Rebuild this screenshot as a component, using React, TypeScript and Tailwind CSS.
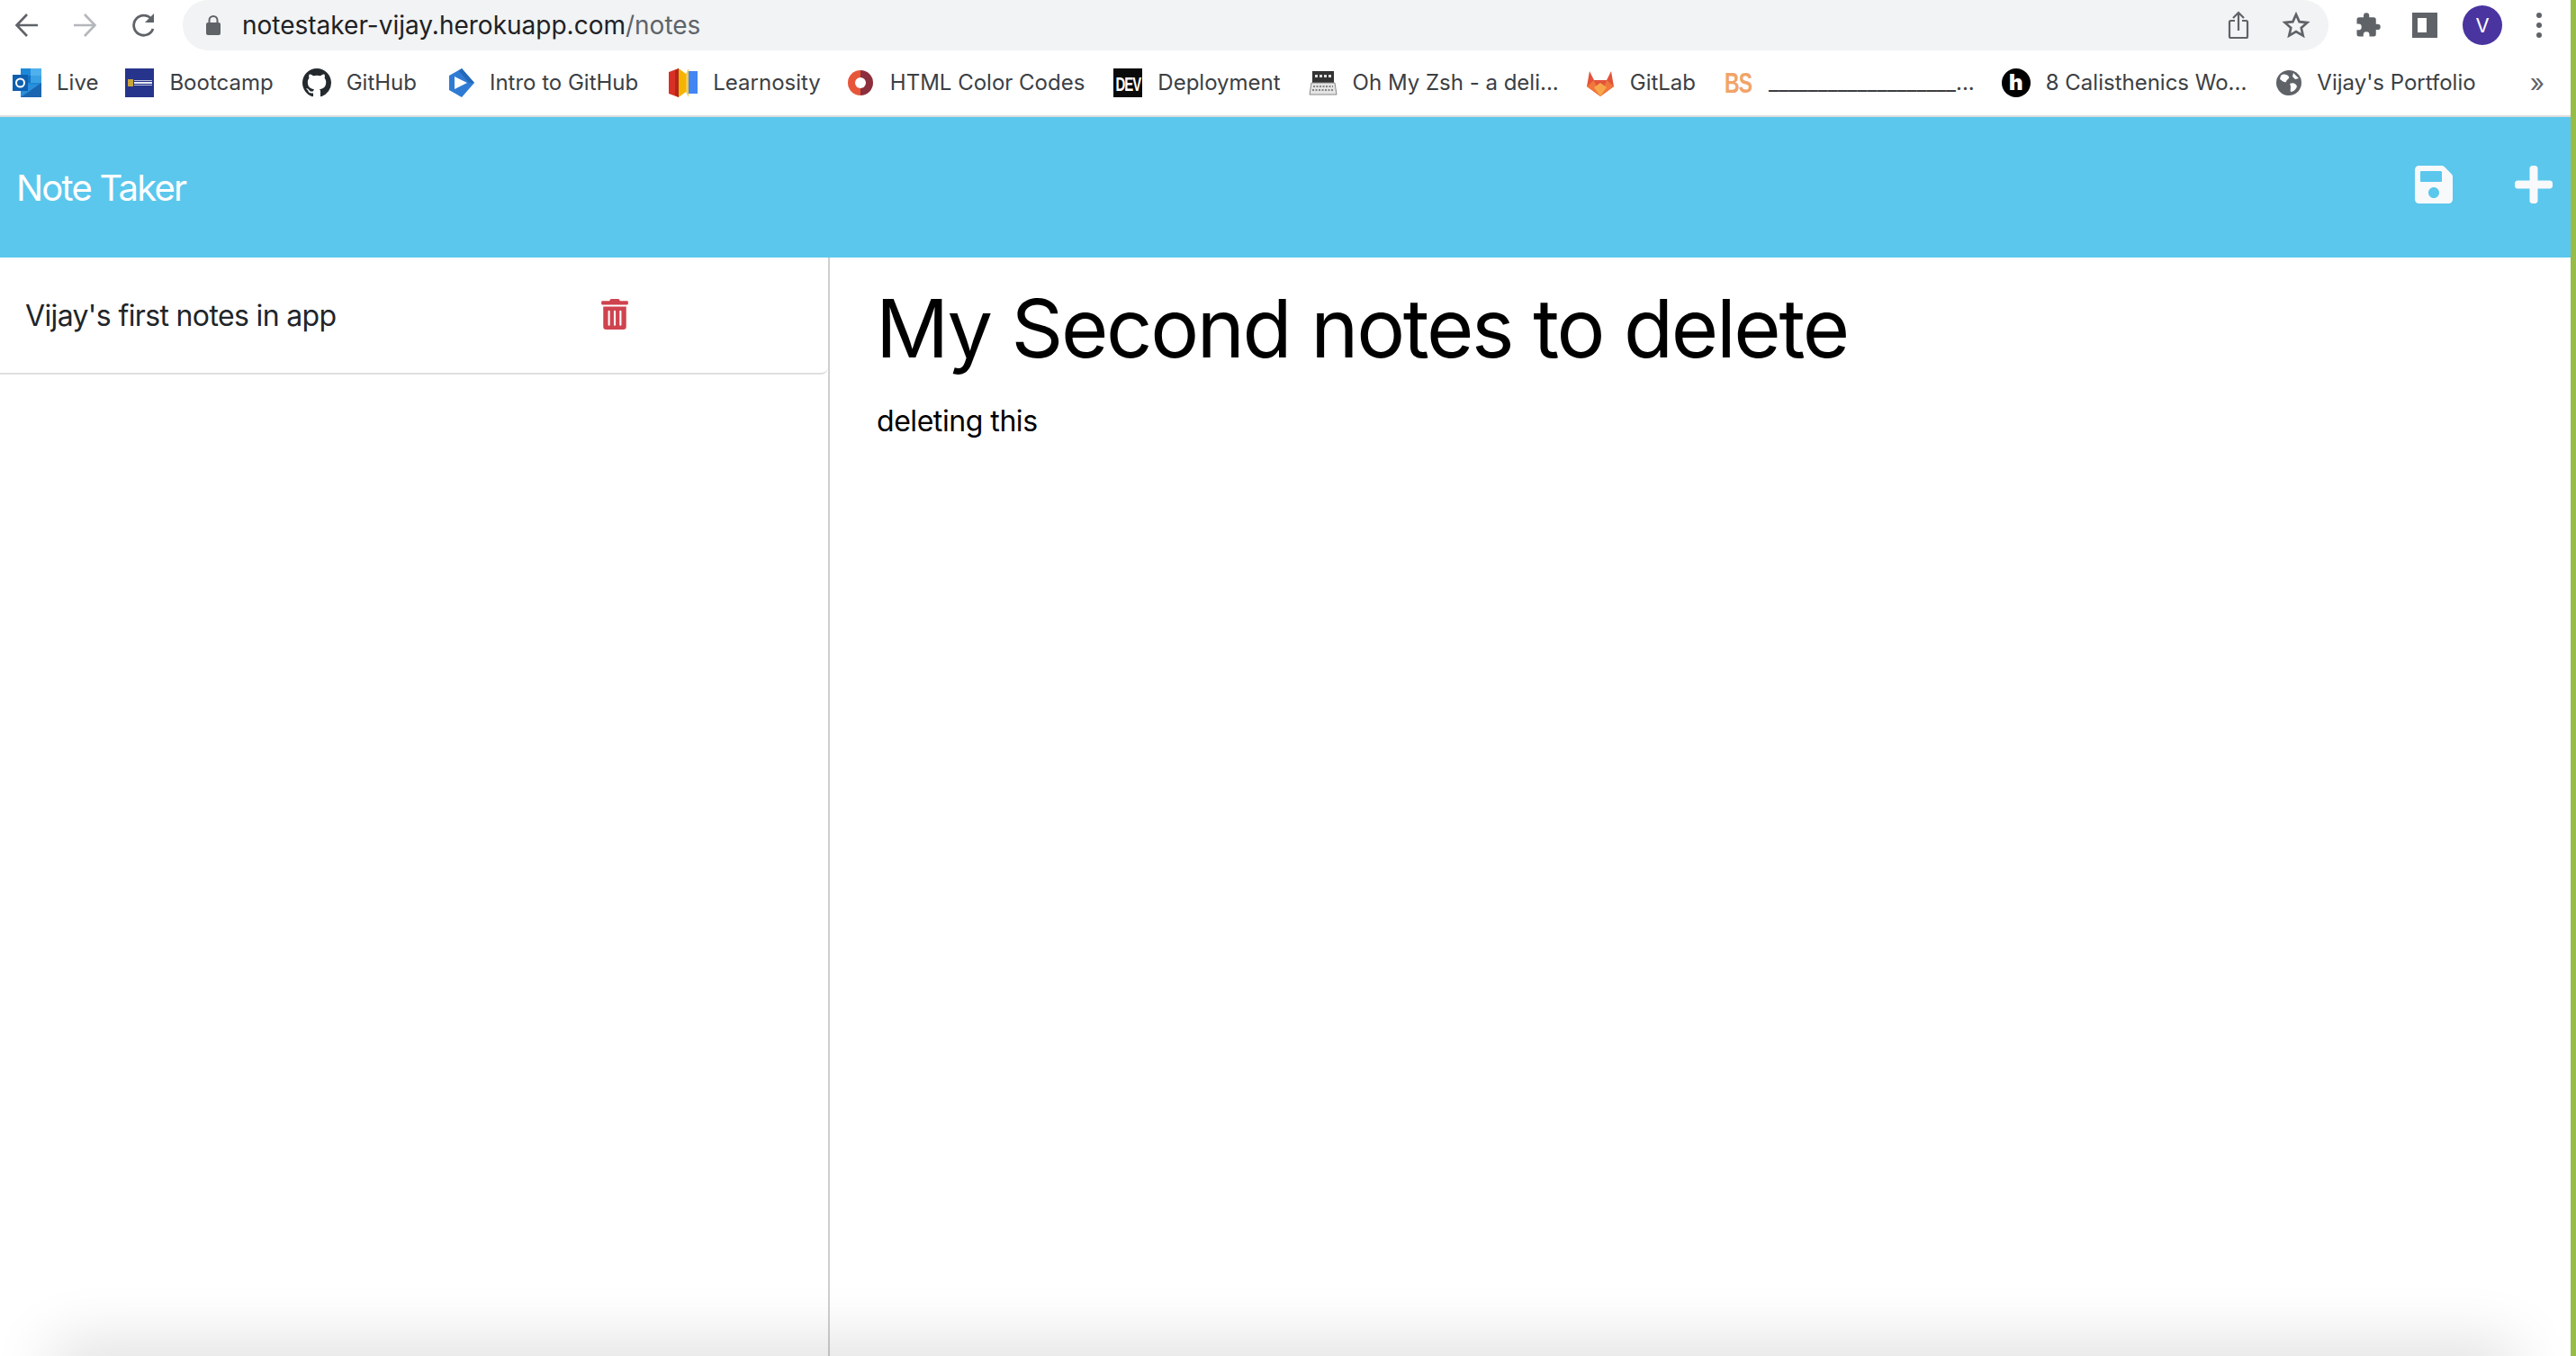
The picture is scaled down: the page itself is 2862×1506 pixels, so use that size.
import { FaPlus, FaSave, FaTrashAlt } from 'react-icons/fa';

const font = { fontFamily: 'Inter, "Liberation Sans", sans-serif' };

function ArrowIcon({ flip, color }: { flip?: boolean; color: string }) {
  return (
    <svg width="28" height="28" viewBox="0 0 28 28" className={flip ? '-scale-x-100' : ''}>
      <path d="M26 14H3M14 2 2.5 14 14 26" fill="none" stroke={color} strokeWidth="2.6" />
    </svg>
  );
}

function Outlook() {
  return (
    <svg width="32" height="32" viewBox="0 0 32 32">
      <rect x="9" y="0" width="23" height="24" fill="#1e88d8" />
      <rect x="20" y="0" width="12" height="8" fill="#50b0ec" />
      <rect x="9" y="8" width="11" height="8" fill="#1272c4" />
      <rect x="20" y="8" width="12" height="8" fill="#3aa0e4" />
      <path d="M9 18 32 18 32 32 9 32Z" fill="#2a8fdc" />
      <path d="M9 32 32 16 32 32Z" fill="#1a66b0" />
      <rect x="0" y="7" width="17" height="18" fill="#0f5fb0" />
      <circle cx="8.5" cy="16" r="4.5" fill="none" stroke="#fff" strokeWidth="2" />
    </svg>
  );
}

function Uwa() {
  return (
    <div className="flex h-8 w-8 items-center justify-center gap-px bg-[#27348b]">
      <div className="h-2 w-1.5 bg-[#c9a53c]" />
      <div className="flex w-5 flex-col gap-px">
        <div className="h-px bg-white/70" />
        <div className="h-0.5 bg-white/90" />
        <div className="h-px bg-white/70" />
      </div>
    </div>
  );
}

function GithubMark() {
  return (
    <svg width="32" height="32" viewBox="0 0 16 16">
      <path
        fill="#24292e"
        d="M8 0C3.58 0 0 3.58 0 8c0 3.54 2.29 6.53 5.47 7.59.4.07.55-.17.55-.38 0-.19-.01-.82-.01-1.49-2.01.37-2.53-.49-2.69-.94-.09-.23-.48-.94-.82-1.13-.28-.15-.68-.52-.01-.53.63-.01 1.08.58 1.23.82.72 1.21 1.87.87 2.33.66.07-.52.28-.87.51-1.07-1.78-.2-3.64-.89-3.64-3.95 0-.87.31-1.59.82-2.15-.08-.2-.36-1.02.08-2.12 0 0 .67-.21 2.2.82.64-.18 1.32-.27 2-.27s1.36.09 2 .27c1.53-1.04 2.2-.82 2.2-.82.44 1.1.16 1.92.08 2.12.51.56.82 1.27.82 2.15 0 3.07-1.87 3.75-3.65 3.95.29.25.54.73.54 1.48 0 1.07-.01 1.93-.01 2.2 0 .21.15.46.55.38A8.01 8.01 0 0 0 16 8c0-4.42-3.58-8-8-8z"
      />
    </svg>
  );
}

function IntroLogo() {
  return (
    <svg width="28" height="32" viewBox="0 0 28 32">
      <path d="M14 0 28 16 14 32 0 24V8Z" fill="#2f7bd4" />
      <path d="M6 9 20 16 6 23Z" fill="#fff" />
      <path d="M14 0 28 16 22 16 11 3Z" fill="#2468b8" />
    </svg>
  );
}

function Learnosity() {
  return (
    <svg width="32" height="32" viewBox="0 0 32 32">
      <path d="M0 4 11 0V32L0 28Z" fill="#d93025" />
      <path d="M7 2 11 0V32L7 30Z" fill="#b3261e" />
      <path d="M11 0 19 6V26L11 32Z" fill="#f4b400" />
      <path d="M19 6 22 0V32L19 26Z" fill="#f7c948" />
      <path d="M22 3H32V28H22Z" fill="#4285f4" />
    </svg>
  );
}

function ColorCodes() {
  return (
    <svg width="32" height="32" viewBox="0 0 32 32">
      <path d="M16 2A14 14 0 0 1 30 16 14 14 0 0 1 16 30Z" fill="#8c2f3c" />
      <path d="M16 2A14 14 0 0 0 2 16 14 14 0 0 0 16 30Z" fill="#e8563a" />
      <circle cx="16" cy="16" r="6" fill="#fff" />
    </svg>
  );
}

function DevBadge() {
  return (
    <div className="flex h-8 w-8 items-center justify-center bg-[#0a0a0a] text-[15px] font-bold leading-none tracking-[-1px] text-white" style={{ fontFamily: '"Liberation Sans", sans-serif' }}>
      <span className="scale-y-150">DEV</span>
    </div>
  );
}

function ZshLogo() {
  return (
    <svg width="32" height="32" viewBox="0 0 32 32">
      <rect x="4" y="3" width="24" height="13" fill="#333" />
      <path d="M7 7h3v3H7zM12 7h3v3h-3zM17 7h3v3h-3zM22 7h3v3h-3z" fill="#ddd" />
      <path d="M3 16h26l2 13H1Z" fill="#e4e4e4" stroke="#888" strokeWidth="1" />
      <path d="M5 20h22M4 24h24" stroke="#666" strokeWidth="1.5" strokeDasharray="2 1.5" />
    </svg>
  );
}

function GitlabLogo() {
  return (
    <svg width="32" height="32" viewBox="0 0 32 32">
      <path d="M16 31 1 20 4 3l5 10h14l5-10 3 17Z" fill="#e2533a" />
      <path d="M1 20 9 13l7 18Z" fill="#f0763b" />
      <path d="M31 20 23 13l-7 18Z" fill="#f0763b" />
      <path d="M9 21 16 16l7 5-7 10Z" fill="#f8a64a" />
    </svg>
  );
}

function BsLogo() {
  return (
    <span
      className="block w-8 origin-left scale-y-[1.35] text-[23px] font-bold leading-8 tracking-[-1px] text-[#f0a468]"
      style={{ fontFamily: '"Liberation Sans", sans-serif' }}
    >
      BS
    </span>
  );
}

function HLogo() {
  return (
    <div className="flex h-8 w-8 items-center justify-center rounded-full bg-black text-[24px] font-black leading-none text-white">h</div>
  );
}

function Globe() {
  return (
    <svg width="28" height="28" viewBox="0 0 28 28">
      <circle cx="14" cy="14" r="14" fill="#5f6368" />
      <path d="M5 6c4-3 7-1 9 1 1 3-3 3-3 6-3 1-5-2-7-3ZM15 15c4-2 7 0 8 3-1 3-4 6-7 6-1-3 1-5-1-9ZM19 3l6 6-4 1-3-3Z" fill="#fff" />
    </svg>
  );
}

const bookmarks = [
  { icon: <Outlook />, label: 'Live', ml: 'ml-[14px]' },
  { icon: <Uwa />, label: 'Bootcamp', ml: 'ml-[30px]' },
  { icon: <GithubMark />, label: 'GitHub', ml: 'ml-[32px]' },
  { icon: <IntroLogo />, label: 'Intro to GitHub', ml: 'ml-[36px]' },
  { icon: <Learnosity />, label: 'Learnosity', ml: 'ml-[34px]' },
  { icon: <ColorCodes />, label: 'HTML Color Codes', ml: 'ml-[28px]' },
  { icon: <DevBadge />, label: 'Deployment', ml: 'ml-[32px]' },
  { icon: <ZshLogo />, label: 'Oh My Zsh - a deli...', ml: 'ml-[31px]' },
  { icon: <GitlabLogo />, label: 'GitLab', ml: 'ml-[30px]' },
  { icon: <BsLogo />, label: '___________________...', ml: 'ml-[32px]' },
  { icon: <HLogo />, label: '8 Calisthenics Wo...', ml: 'ml-[30px]' },
  { icon: <Globe />, label: "Vijay's Portfolio", ml: 'ml-[33px]' },
];

function BrowserChrome() {
  return (
    <div className="bg-white">
      <div className="flex h-14 items-center">
        <div className="ml-4 flex items-center gap-9">
          <ArrowIcon color="#5f6368" />
          <ArrowIcon flip color="#b4b7bb" />
          <svg width="28" height="30" viewBox="0 0 28 30" className="ml-[2px]">
            <path d="M24 19a11 11 0 1 1-2-11" fill="none" stroke="#5f6368" strokeWidth="2.8" />
            <path d="M25 2v10H15Z" fill="#5f6368" />
          </svg>
        </div>
        <div className="ml-[29px] flex h-14 w-[2384px] items-center rounded-[28px] bg-[#f1f3f4]">
          <svg width="16" height="22" viewBox="0 0 16 22" className="ml-[26px]">
            <rect x="0" y="8" width="16" height="14" rx="2" fill="#5f6368" />
            <path d="M3.5 9V5.5a4.5 4.5 0 0 1 9 0V9" fill="none" stroke="#5f6368" strokeWidth="2" />
          </svg>
          <div className="ml-[24px] text-[28px] leading-none text-[#202124]">
            notestaker-vijay.herokuapp.com<span className="text-[#5f6368]">/notes</span>
          </div>
          <div className="ml-auto mr-[20px] flex items-center gap-[36px]">
            <svg width="24" height="32" viewBox="0 0 24 32">
              <path d="M8 11H3.5A1.5 1.5 0 0 0 2 12.500V28.500A1.500 1.500 0 0 0 3.500 30H20.500A1.500 1.500 0 0 0 22 28.500V12.500A1.500 1.500 0 0 0 20.500 11H16M12 22V2M6 8l6-6 6 6" fill="none" stroke="#5f6368" strokeWidth="2.200" />
            </svg>
            <svg width="32" height="32" viewBox="0 0 24 24">
              <path d="m12 3 2.700 6.100 6.600.7-5 4.400 1.500 6.500L12 17.300l-5.800 3.400 1.500-6.500-5-4.400 6.600-.7Z" fill="none" stroke="#5f6368" strokeWidth="2" />
            </svg>
          </div>
        </div>
        <div className="ml-[29px] flex items-center">
          <svg width="30" height="30" viewBox="0 0 24 24">
            <path fill="#5f6368" d="M20.500 11H19V7a2 2 0 0 0-2-2h-4V3.500a2.500 2.500 0 0 0-5 0V5H4a2 2 0 0 0-2 2v3.800h1.500a2.700 2.700 0 0 1 0 5.400H2V20a2 2 0 0 0 2 2h3.800v-1.500a2.700 2.700 0 0 1 5.400 0V22H17a2 2 0 0 0 2-2v-4h1.500a2.500 2.500 0 0 0 0-5Z" />
          </svg>
          <div className="ml-[34px] h-7 w-7 border-[6px] border-r-[12px] border-[#5f6368]" />
          <div className="ml-[28px] flex h-11 w-11 items-center justify-center rounded-full bg-[#4a34a0] text-[22px] text-white">V</div>
          <div className="ml-[38px] flex flex-col gap-[5px]">
            <div className="h-[6px] w-[6px] rounded-full bg-[#5f6368]" />
            <div className="h-[6px] w-[6px] rounded-full bg-[#5f6368]" />
            <div className="h-[6px] w-[6px] rounded-full bg-[#5f6368]" />
          </div>
        </div>
      </div>
      <div className="flex h-[74px] items-center border-b-2 border-[#dcdcdc] text-[24px] leading-none text-[#3c4043]">
        {bookmarks.map((b) => (
          <div key={b.label} className={`flex items-center gap-[17px] ${b.ml}`}>
            <span className="flex h-8 items-center">{b.icon}</span>
            <span className="whitespace-nowrap">{b.label}</span>
          </div>
        ))}
        <span className="ml-auto mr-[29px] text-[28px] text-[#5f6368]">»</span>
      </div>
    </div>
  );
}

export default function App() {
  return (
    <div className="relative flex h-[1506px] w-[2862px] flex-col overflow-hidden bg-white" style={font}>
      <div className="flex min-h-0 flex-1 flex-col pr-[6px]">
        <BrowserChrome />
        <header className="flex h-[156px] items-center bg-[#5bc7ed] pl-[18px] pr-[17px]">
          <span className="pt-[2px] text-[40px] leading-none tracking-[-1.8px] text-white">Note Taker</span>
          <div className="ml-auto flex items-center gap-[63px] pb-[6px] text-[#f8f9fa]">
            <FaSave size={48} />
            <FaPlus size={48} />
          </div>
        </header>
        <main className="flex min-h-0 flex-1">
          <aside className="w-[922px] shrink-0 border-r-2 border-[#cfcfcf]">
            <div className="flex h-[130px] items-center rounded-br-[8px] border-b-2 border-[#dfdfdf] pl-[28px]">
              <span className="w-[638px] pt-[2px] text-[32px] leading-none tracking-[-0.64px] text-[#212529]">Vijay's first notes in app</span>
              <FaTrashAlt size={34} className="mb-[3px] text-[#cf434f]" />
            </div>
          </aside>
          <section className="flex-1 pl-[51px] pt-[25px] text-black">
            <h1 className="text-[90px] font-normal leading-[1.2] tracking-[-2.35px]">My Second notes to delete</h1>
            <p className="ml-[1px] mt-[25px] text-[32px] leading-[1.5] tracking-[-0.45px]">deleting this</p>
          </section>
        </main>
      </div>
      <div className="absolute inset-y-0 right-0 w-[6px] bg-[#97bd47]" />
      <div className="pointer-events-none absolute bottom-[-40px] left-[70px] right-[80px] h-[40px] shadow-[0_0_70px_12px_rgba(0,0,0,0.14)]" />
    </div>
  );
}
